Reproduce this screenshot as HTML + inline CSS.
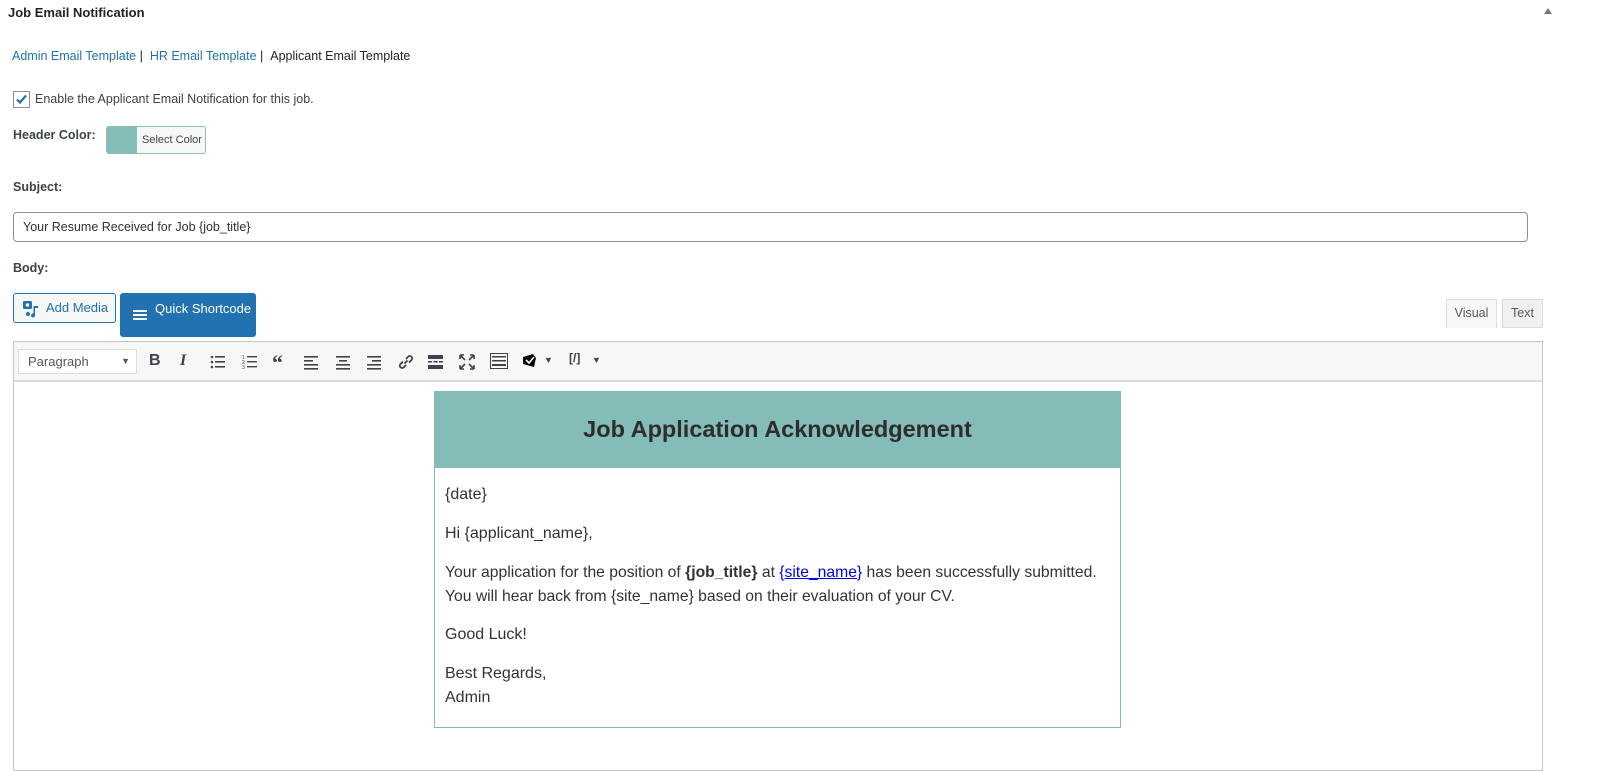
<!DOCTYPE html>
<html><head><meta charset="utf-8"><style>
*{box-sizing:border-box;margin:0;padding:0}
body{width:1603px;height:764px;overflow:hidden;background:#fff;font-family:"Liberation Sans",sans-serif;color:#1d2327;position:relative;font-size:13px}
.a{position:absolute;white-space:nowrap}
.lnk{color:#2271b1}
.ic{position:absolute;top:352px}
</style></head><body>
<div class="a" style="left:8px;top:5px;font-size:13px;font-weight:bold;color:#1d2327">Job Email Notification</div>
<div class="a" style="left:1544px;top:8px;width:0;height:0;border-left:4px solid transparent;border-right:4px solid transparent;border-bottom:6px solid #787c82"></div>
<div class="a" style="left:12px;top:49px;font-size:12.5px"><span class="lnk">Admin Email Template</span> | &nbsp;<span class="lnk">HR Email Template</span> | &nbsp;Applicant Email Template</div>
<div class="a" style="left:13px;top:91px;width:17px;height:17px;border:1px solid #8c8f94;background:#fff"><svg width="15" height="15" viewBox="0 0 15 15"><path d="M3 7.5l3 3 6-7" stroke="#2271b1" stroke-width="2.2" fill="none"/></svg></div>
<div class="a" style="left:35px;top:92px;font-size:12.5px;color:#3c434a">Enable the Applicant Email Notification for this job.</div>
<div class="a" style="left:13px;top:128px;font-size:12.5px;font-weight:bold;color:#3c434a">Header Color:</div>
<div class="a" style="left:106px;top:126px;width:100px;height:28px;border:1px solid #8fbdb7;border-radius:3px;background:#84bcb7;overflow:hidden"><div style="position:absolute;left:30px;top:0;width:70px;height:26px;background:#f6f7f7;font-size:11px;color:#3c434a;line-height:26px;text-align:center">Select Color</div></div>
<div class="a" style="left:13px;top:180px;font-size:12.5px;font-weight:bold;color:#3c434a">Subject:</div>
<div class="a" style="left:13px;top:212px;width:1515px;height:30px;border:1px solid #8c8f94;border-radius:4px;padding:0 9px;line-height:28px;font-size:12.5px;color:#2c3338">Your Resume Received for Job {job_title}</div>
<div class="a" style="left:13px;top:261px;font-size:12.5px;font-weight:bold;color:#3c434a">Body:</div>
<div class="a" style="left:13px;top:293px;width:103px;height:30px;border:1px solid #2271b1;border-radius:3px;color:#2271b1;font-size:13px;line-height:28px;padding-left:32px;background:#f6f7f7">Add Media<svg style="position:absolute;left:8px;top:6px" width="18" height="18" viewBox="0 0 18 18"><rect x="1" y="1" width="9" height="8" rx="1.5" fill="#2271b1"/><circle cx="5.5" cy="5" r="1.7" fill="#fff"/><path d="M13 6v9.5a2 2 0 1 1-1.5-2V6z M13 6h3v2h-3z" fill="#2271b1"/><circle cx="6" cy="14" r="2" fill="#2271b1"/></svg></div>
<div class="a" style="left:120px;top:293px;width:136px;height:44px;border-radius:3px;background:#2271b1;color:#fff;font-size:13px;padding:8px 0 0 35px">Quick Shortcode<div style="position:absolute;left:13px;top:17px;width:14px;height:2px;background:#fff;box-shadow:0 4px #fff,0 8px #fff"></div></div>
<div class="a" style="left:1446px;top:299px;width:51px;height:29px;border:1px solid #dcdcde;border-bottom:none;background:#f6f7f7;color:#50575e;font-size:12.5px;text-align:center;line-height:27px">Visual</div>
<div class="a" style="left:1502px;top:299px;width:41px;height:29px;border:1px solid #dcdcde;background:#f0f0f1;color:#50575e;font-size:12.5px;text-align:center;line-height:27px">Text</div>
<div class="a" style="left:13px;top:341px;width:1530px;height:430px;border:1px solid #c3c4c7;background:#fff"></div>
<div class="a" style="left:14px;top:342px;width:1528px;height:40px;background:#f6f7f7;border-bottom:2px solid #dcdcde"></div>
<div class="a" style="left:18px;top:349px;width:119px;height:25px;border:1px solid #dcdcde;background:#fff;font-size:13px;color:#50575e;padding-left:9px;line-height:23px">Paragraph<span style="position:absolute;right:6px;top:0;font-size:9px">▼</span></div>
<div class="ic" style="left:149px;top:352px;font-weight:bold;font-size:16px;color:#3c434a">B</div>
<div class="ic" style="left:180px;top:352px;font-style:italic;font-size:16px;font-family:'Liberation Serif',serif;font-weight:bold;color:#3c434a">I</div>
<svg class="ic" style="left:210px;top:354px" width="16" height="16"><g fill="#3c434a"><circle cx="2" cy="3" r="1.3"/><circle cx="2" cy="8" r="1.3"/><circle cx="2" cy="13" r="1.3"/><rect x="5" y="2" width="10" height="1.6"/><rect x="5" y="7" width="10" height="1.6"/><rect x="5" y="12" width="10" height="1.6"/></g></svg>
<svg class="ic" style="left:242px;top:354px" width="16" height="16"><g fill="#3c434a"><text x="0" y="5" font-size="5">1</text><text x="0" y="10" font-size="5">2</text><text x="0" y="15" font-size="5">3</text><rect x="5" y="2" width="10" height="1.4"/><rect x="5" y="7" width="10" height="1.4"/><rect x="5" y="12" width="10" height="1.4"/></g></svg>
<div class="ic" style="left:272px;top:350px;font-size:22px;font-weight:bold;color:#3c434a;font-family:'Liberation Serif',serif">“</div>
<svg class="ic" style="left:304px;top:354px" width="16" height="16"><g fill="#3c434a"><rect x="0" y="2" width="14" height="1.6"/><rect x="0" y="6" width="9" height="1.6"/><rect x="0" y="10" width="14" height="1.6"/><rect x="0" y="14" width="14" height="1.6"/></g></svg>
<svg class="ic" style="left:335px;top:354px" width="16" height="16"><g fill="#3c434a"><rect x="1" y="2" width="14" height="1.6"/><rect x="4" y="6" width="8" height="1.6"/><rect x="1" y="10" width="14" height="1.6"/><rect x="1" y="14" width="14" height="1.6"/></g></svg>
<svg class="ic" style="left:366px;top:354px" width="16" height="16"><g fill="#3c434a"><rect x="1" y="2" width="14" height="1.6"/><rect x="6" y="6" width="9" height="1.6"/><rect x="1" y="10" width="14" height="1.6"/><rect x="1" y="14" width="14" height="1.6"/></g></svg>
<svg class="ic" style="left:397px;top:353px" width="18" height="18"><path d="M7.5 10.5l3-3 M6 8.5l-2.5 2.5a2.3 2.3 0 0 0 3.3 3.3L9 12 M12 9.5l2.5-2.5a2.3 2.3 0 0 0-3.3-3.3L9 6" stroke="#3c434a" stroke-width="1.8" fill="none"/></svg>
<svg class="ic" style="left:428px;top:354px" width="16" height="16"><g fill="#3c434a"><rect x="0" y="1" width="15" height="4"/><rect x="0" y="7" width="4" height="1.5"/><rect x="5.5" y="7" width="4" height="1.5"/><rect x="11" y="7" width="4" height="1.5"/><rect x="0" y="11" width="15" height="4"/></g></svg>
<svg class="ic" style="left:459px;top:354px" width="16" height="16"><path d="M1 1l5 5M15 1l-5 5M1 15l5-5M15 15l-5-5M1 1h4M1 1v4M15 1h-4M15 1v4M1 15h4M1 15v-4M15 15h-4M15 15v-4" stroke="#3c434a" stroke-width="1.6" fill="none"/></svg>
<svg class="ic" style="left:490px;top:353px" width="18" height="16"><rect x="0.5" y="0.5" width="17" height="15" fill="none" stroke="#3c434a"/><g fill="#3c434a"><rect x="2" y="3" width="14" height="1.5"/><rect x="2" y="7" width="14" height="1.5"/><rect x="2" y="11" width="14" height="2"/></g></svg>
<svg class="ic" style="left:522px;top:353px" width="16" height="16"><path d="M1 4l10-3 3 4-2 9-11-3z" fill="#000"/><path d="M4 7l3 3 5-6" stroke="#fff" stroke-width="1.6" fill="none"/></svg>
<div class="ic" style="left:544px;top:355px;font-size:9px;color:#3c434a">▼</div>
<div class="ic" style="left:569px;top:351px;font-size:12px;font-weight:bold;color:#3c434a">[/]</div>
<div class="ic" style="left:592px;top:355px;font-size:9px;color:#3c434a">▼</div>
<div class="a" style="left:434px;top:391px;width:687px;height:337px;border:1px solid #84bcb7"></div>
<div class="a" style="left:434px;top:391px;width:687px;height:77px;background:#84bcb7;color:#2d2d2d;font-size:23.5px;font-weight:bold;text-align:center;line-height:77px">Job Application Acknowledgement</div>
<div class="a" style="left:445px;top:483px;font-size:16px;color:#333;line-height:24px">{date}</div>
<div class="a" style="left:445px;top:522px;font-size:16px;color:#333;line-height:24px">Hi {applicant_name},</div>
<div class="a" style="left:445px;top:561px;font-size:15.7px;color:#333;line-height:24px">Your application for the position of <b>{job_title}</b> at <span style="color:#0000ee;text-decoration:underline">{site_name}</span> has been successfully submitted.<br>You will hear back from {site_name} based on their evaluation of your CV.</div>
<div class="a" style="left:445px;top:623px;font-size:16px;color:#333;line-height:24px">Good Luck!</div>
<div class="a" style="left:445px;top:662px;font-size:16px;color:#333;line-height:24px">Best Regards,<br>Admin</div>
</body></html>
